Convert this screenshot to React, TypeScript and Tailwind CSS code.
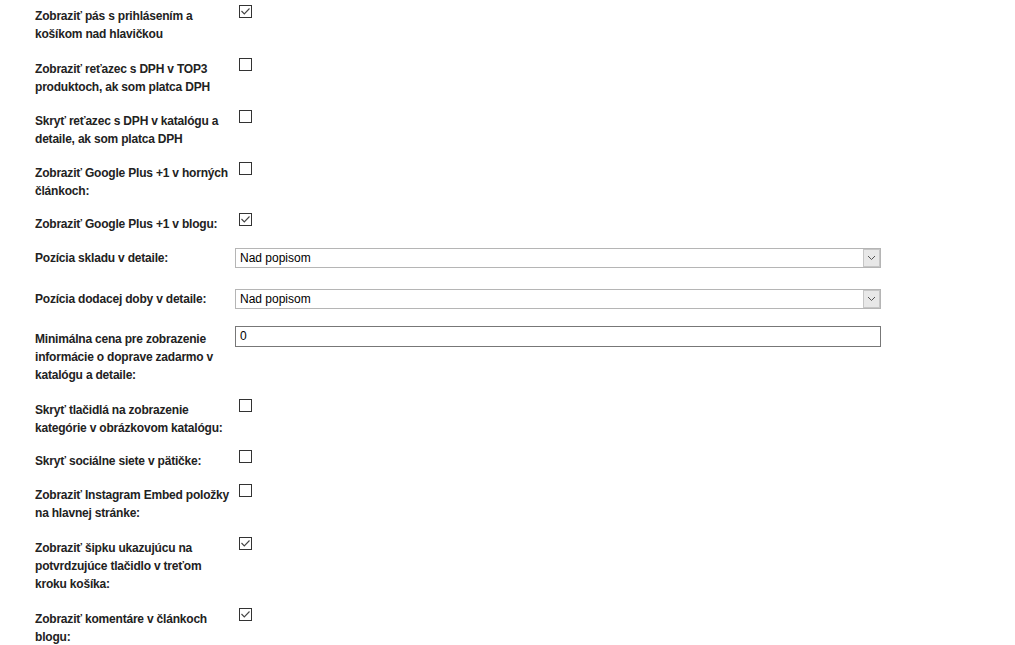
import { ReactNode } from "react";

type Row = {
    label: string,
    kind: "check" | "select" | "input",
    checked?: boolean,
    value?: string,
    gap: string,
}

const rows: Row[] = [
    { label: "Zobraziť pás s prihlásením a košíkom nad hlavičkou", kind: "check", checked: true, gap: "mb-[15px]" },
    { label: "Zobraziť reťazec s DPH v TOP3 produktoch, ak som platca DPH", kind: "check", gap: "mb-[14px]" },
    { label: "Skryť reťazec s DPH v katalógu a detaile, ak som platca DPH", kind: "check", gap: "mb-[14px]" },
    { label: "Zobraziť Google Plus +1 v horných článkoch:", kind: "check", gap: "mb-[13px]" },
    { label: "Zobraziť Google Plus +1 v blogu:", kind: "check", checked: true, gap: "mb-[15px]" },
    { label: "Pozícia skladu v detaile:", kind: "select", value: "Nad popisom", gap: "mb-[21px]" },
    { label: "Pozícia dodacej doby v detaile:", kind: "select", value: "Nad popisom", gap: "mb-[17px]" },
    { label: "Minimálna cena pre zobrazenie informácie o doprave zadarmo v katalógu a detaile:", kind: "input", value: "0", gap: "mb-[15px]" },
    { label: "Skryť tlačidlá na zobrazenie kategórie v obrázkovom katalógu:", kind: "check", gap: "mb-[13px]" },
    { label: "Skryť sociálne siete v pätičke:", kind: "check", gap: "mb-[14px]" },
    { label: "Zobraziť Instagram Embed položky na hlavnej stránke:", kind: "check", gap: "mb-[15px]" },
    { label: "Zobraziť šipku ukazujúcu na potvrdzujúce tlačidlo v treťom kroku košíka:", kind: "check", checked: true, gap: "mb-[15px]" },
    { label: "Zobraziť komentáre v článkoch blogu:", kind: "check", checked: true, gap: "mb-0" },
]

function Checkbox({ checked }: { checked?: boolean }) {
    return <div className="ml-[4px] w-[13px] h-[13px] border border-[#333] bg-white flex items-center justify-center">
        {checked && (
            <svg width="11" height="11" viewBox="0 0 11 11">
                <path d="M1.5 5 L4.3 8 L9.5 2.5" fill="none" stroke="#444" strokeWidth="1.1" />
            </svg>
        )}
    </div>
}

function Select({ value }: { value?: string }) {
    return <div className="w-[646px] h-[20px] border border-[#b5b5b5] bg-white flex items-center justify-between">
        <span className="pl-[4px] text-[12px] text-black">{value}</span>
        <div className="w-[17px] h-[18px] bg-[#e8e8e8] border border-[#c6c6c6] flex items-center justify-center">
            <svg width="9" height="6" viewBox="0 0 9 6">
                <path d="M1 1 L4.5 4.5 L8 1" fill="none" stroke="#555" strokeWidth="1" />
            </svg>
        </div>
    </div>
}

function Field({ label, pad, gap, children }: { label: string, pad: string, gap: string, children: ReactNode }) {
    return <div className={`flex items-start ${gap}`}>
        <div className={`w-[200px] ${pad} font-bold text-[12px] leading-[18px] tracking-[-0.2px] text-[#222]`}>{label}</div>
        <div>{children}</div>
    </div>
}

export default function App() {
    return <div className="min-h-[645px] bg-white pt-[5px] pl-[35px]" style={{ fontFamily: '"Liberation Sans", Arial, sans-serif' }}>
        {rows.map((r, i) => {
            if (r.kind === "select") {
                return <Field key={i} label={r.label} pad="pt-[1px]" gap={r.gap}><Select value={r.value} /></Field>
            }
            if (r.kind === "input") {
                return <Field key={i} label={r.label} pad="pt-[4px]" gap={r.gap}>
                    <div className="w-[646px] h-[21px] border border-[#777] bg-white pl-[4px] text-[12px] leading-[19px] text-black">{r.value}</div>
                </Field>
            }
            return <Field key={i} label={r.label} pad="pt-[2px]" gap={r.gap}><Checkbox checked={r.checked} /></Field>
        })}
    </div>
}
